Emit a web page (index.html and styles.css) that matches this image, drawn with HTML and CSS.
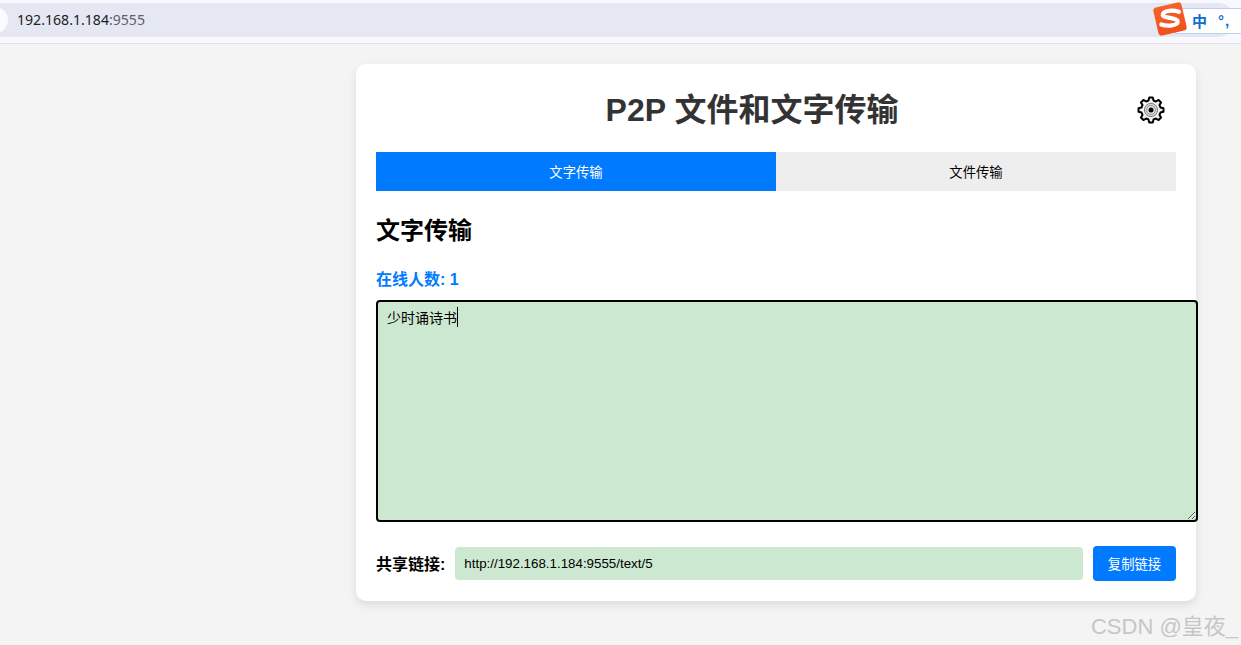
FILE: index.html
```html
<!DOCTYPE html>
<html lang="zh-CN">
<head>
<meta charset="utf-8">
<title>P2P 文件和文字传输</title>
<link rel="stylesheet" href="styles.css">
</head>
<body>
<header class="browser-bar">
  <div class="address">
    <span class="site-dot"></span>
    <span class="url">192.168.1.184<span class="url-port">:9555</span></span>
  </div>
</header>
<div class="ime">
  <svg class="ime-logo" width="40" height="40" viewBox="0 0 36 36" aria-hidden="true">
    <defs><linearGradient id="ime-grad" x1="0" y1="0" x2="0" y2="1"><stop offset="0" stop-color="#f4622a"/><stop offset="1" stop-color="#f0501c"/></linearGradient></defs>
    <rect x="5" y="5" width="26" height="26" rx="3" fill="url(#ime-grad)" transform="rotate(-13 18 18)"/>
    <path d="M26 11.500C21 9.800 12 10.200 11.500 14.200c-.4 3.300 13.200 2.300 13.400 6 .2 3.900-9.400 4.800-14.700 2.700" fill="none" stroke="#fff" stroke-width="3.800" stroke-linecap="round"/>
  </svg>
  <span class="ime-text">中</span><span class="ime-marks">°,</span>
</div>
<main class="page">
  <section class="card">
    <div class="card-head">
      <h1 class="title">P2P 文件和文字传输</h1>
      <button class="gear" type="button" aria-label="设置">
        <svg width="28" height="28" viewBox="0 0 28 28" aria-hidden="true">
          <polygon points="11.46,4.53 12.25,1.52 15.75,1.52 16.54,4.53 18.9,5.51 21.58,3.94 24.06,6.42 22.49,9.1 23.47,11.46 26.48,12.25 26.48,15.75 23.47,16.54 22.49,18.9 24.06,21.58 21.58,24.06 18.9,22.49 16.54,23.47 15.75,26.48 12.25,26.48 11.46,23.47 9.1,22.49 6.42,24.06 3.94,21.58 5.51,18.9 4.53,16.54 1.52,15.75 1.52,12.25 4.53,11.46 5.51,9.1 3.94,6.42 6.42,3.94 9.1,5.51" fill="#f2f2f2" stroke="#000" stroke-width="2" stroke-linejoin="round"/>
          <circle cx="14" cy="14" r="6.600" fill="#d4d4d4" stroke="#666" stroke-width=".8"/>
          <circle cx="14" cy="14" r="4.400" fill="#e6e6e6" stroke="#888" stroke-width=".8"/>
          <circle cx="14" cy="14" r="2.500" fill="#000"/>
        </svg>
      </button>
    </div>
    <nav class="tabs">
      <button class="tab tab-active" type="button">文字传输</button>
      <button class="tab" type="button">文件传输</button>
    </nav>
    <h2 class="section-title">文字传输</h2>
    <p class="online">在线人数: 1</p>
    <div class="editor" role="textbox" aria-multiline="true"><span class="editor-text">少时诵诗书</span></div>
    <div class="share">
      <label class="share-label" for="share-link">共享链接:</label>
      <input id="share-link" class="share-input" type="text" value="http://192.168.1.184:9555/text/5" readonly>
      <button class="copy" type="button">复制链接</button>
    </div>
  </section>
</main>
<div class="watermark">CSDN @皇夜_</div>
</body>
</html>
```

FILE: styles.css
```css
* { box-sizing: border-box; }
html, body { height: 100%; }
body {
  margin: 0;
  overflow: hidden;
  background: #f4f4f4;
  color: #000;
  font-family: "Liberation Sans", "Noto Sans CJK SC", sans-serif;
}
.browser-bar {
  height: 44px;
  padding: 3px 6px 6px 0;
  background: #f8f8fe;
  border-bottom: 1px solid #dfdfe8;
}
.address {
  height: 34px;
  display: flex;
  align-items: center;
  gap: 9px;
  background: #e5e8f3;
  border-radius: 0 17px 17px 0;
  overflow: hidden;
}
.site-dot {
  width: 26px;
  height: 26px;
  margin-left: -18px;
  border-radius: 50%;
  background: #fbfbff;
  flex: none;
}
.url {
  margin-top: -2px;
  font: 14.1px "Noto Sans", "Liberation Sans", sans-serif;
  color: #202124;
}
.url-port { color: #5a5f68; }
.ime {
  position: absolute;
  top: 8px;
  right: 0;
  width: 66px;
  height: 26px;
  display: flex;
  align-items: center;
  padding-left: 16px;
  background: #fff;
  border: 1px solid #b9d2ee;
  border-right: 0;
  color: #0a6fd0;
}
.ime-logo {
  position: absolute;
  left: -26px;
  top: -10px;
}
.ime-text { margin-top: -2px; font: 700 15px "Noto Sans CJK SC", sans-serif; }
.ime-marks { margin-left: 11px; margin-top: -2px; font: 700 15px "Liberation Sans", sans-serif; letter-spacing: 1px; }
.page {
  display: flex;
  justify-content: flex-start;
  padding: 20px 45px 0 356px;
}
.card {
  width: 840px;
  height: 537px;
  padding: 20px;
  background: #fff;
  border-radius: 10px;
  box-shadow: 0 4px 10px rgba(0, 0, 0, .1);
}
.card-head {
  display: flex;
  align-items: center;
  height: 46px;
  margin-bottom: 22px;
}
.title {
  flex: 1;
  margin: 0;
  text-align: center;
  font-size: 32px;
  font-weight: 700;
  color: #333;
}
.gear {
  width: 48px;
  height: 30px;
  margin-top: 6px;
  padding: 0 0 0 9px;
  display: flex;
  align-items: center;
  background: none;
  border: 0;
}
.tabs { display: flex; }
.tab {
  flex: 1;
  height: 39px;
  padding: 0;
  border: 0;
  background: #eee;
  color: #000;
  font: 13.33px "Liberation Sans", "Noto Sans CJK SC", sans-serif;
}
.tab-active { background: #007bff; color: #fff; }
.section-title {
  margin: 24px 0 0;
  font-size: 24px;
  line-height: 32px;
  font-weight: 700;
}
.online {
  margin: 23px 0 0;
  font-size: 16px;
  line-height: 20px;
  font-weight: 700;
  color: #007bff;
}
.editor {
  width: 822px;
  height: 222px;
  margin-top: 10px;
  padding: 7px 9px;
  background: #cde8d0;
  border: 2px solid #000;
  border-radius: 4px;
  overflow: auto;
  resize: both;
  color: #000;
  font: 14px/16px "Noto Sans CJK SC", sans-serif;
}
.editor-text { border-right: 1px solid #000; }
.share {
  display: flex;
  align-items: center;
  margin-top: 24px;
}
.share-label {
  margin: -2px 10px 0 0;
  font-size: 16px;
  font-weight: 700;
  white-space: nowrap;
}
.share-input {
  flex: 1;
  min-width: 0;
  height: 33px;
  padding: 0 9px;
  margin-right: 10px;
  background: #cde8d0;
  border: 0;
  border-radius: 4px;
  color: #000;
  font: 13.33px "Liberation Sans", sans-serif;
}
.copy {
  width: 83px;
  height: 35px;
  padding: 0;
  border: 0;
  border-radius: 4px;
  background: #007bff;
  color: #fff;
  font: 13.33px "Liberation Sans", "Noto Sans CJK SC", sans-serif;
}
.watermark {
  position: absolute;
  right: 3px;
  bottom: 5px;
  font: 22px "Liberation Sans", "Noto Sans CJK SC", sans-serif;
  color: #c6c6c6;
}
```
